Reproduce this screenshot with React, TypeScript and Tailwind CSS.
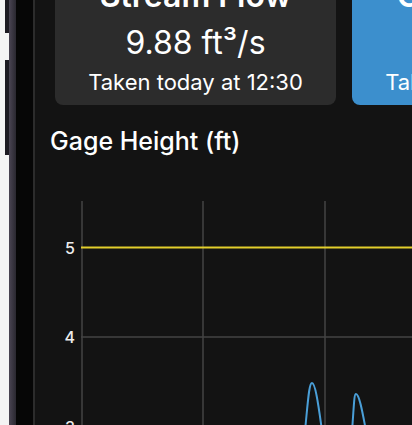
import React from "react";

interface ReadingCardProps {
  title: string;
  value: React.ReactNode;
  takenAt: string;
  tone: "dark" | "blue";
}

const ReadingCard = ({ title, value, takenAt, tone }: ReadingCardProps) => {
  const bg = tone === "blue" ? "bg-[#3c8fcd]" : "bg-[#2c2c2c]";
  return (
    <div
      className={`${bg} flex w-[281px] shrink-0 flex-col items-center rounded-[8px] pt-[17px] pb-[9px] text-white`}
    >
      <div className="text-[32px] leading-[38px] font-semibold whitespace-nowrap">{title}</div>
      <div className="mt-[9px] text-[32px] leading-[38px] whitespace-nowrap">{value}</div>
      <div className="mt-[6px] text-[22px] leading-[28px] whitespace-nowrap">{takenAt}</div>
    </div>
  );
};

const GageChart = () => {
  const grid = "#454545";
  return (
    <svg width="377" height="235" viewBox="35 190 377 235" className="block">
      {[82, 203, 325].map((x) => (
        <line key={x} x1={x} y1={200} x2={x} y2={425} stroke={grid} strokeWidth={1.5} />
      ))}
      <line x1={81} y1={336} x2={412} y2={336} stroke={grid} strokeWidth={1.5} />
      <line x1={81} y1={246.5} x2={412} y2={246.5} stroke="#e3cf2c" strokeWidth={2} />
      <g fill="#ececec" fontSize="16" fontWeight="500" fontFamily="Inter, sans-serif" textAnchor="end">
        <text x={75} y={252.5}>5</text>
        <text x={75} y={342}>4</text>
        <text x={75} y={432}>3</text>
      </g>
      <path
        d="M305 430 C308 400, 309 382, 312 382 C315 382, 318 400, 322 430"
        fill="none"
        stroke="#4a9fd8"
        strokeWidth={2}
      />
      <path
        d="M352 430 C354 405, 354 393, 356 393 C359 393, 362 408, 366 430"
        fill="none"
        stroke="#4a9fd8"
        strokeWidth={2}
      />
    </svg>
  );
};

export default function App() {
  return (
    <div className="flex h-[425px] w-[412px] overflow-hidden bg-white font-['Inter',sans-serif]">
      <div className="w-[5px] shrink-0 bg-[#f4f4f4]" />
      <div className="flex w-[4px] shrink-0 flex-col">
        <div className="h-[33px] bg-[#1d1b22]" />
        <div className="h-[27px] bg-[#f4f4f4]" />
        <div className="h-[95px] bg-[#1d1b22]" />
        <div className="flex-1 bg-[#f4f4f4]" />
      </div>
      <div className="w-[7px] shrink-0 bg-gradient-to-r from-[#4a4553] to-[#2a2830]" />
      <div className="w-[17px] shrink-0 bg-[#060606]" />
      <div className="w-[2px] shrink-0 bg-[#2c2c2c]" />
      <div className="flex min-w-0 flex-1 flex-col bg-[#131313]">
        <div className="-mt-[40px] flex gap-[16px] pl-[20px]">
          <ReadingCard
            tone="dark"
            title="Stream Flow"
            value={<>9.88 ft³/s</>}
            takenAt="Taken today at 12:30"
          />
          <ReadingCard tone="blue" title="Gage Height" value="3.02 ft" takenAt="Taken today at 12:30" />
        </div>
        <div className="mt-[21px] pl-[15px] text-[25px] leading-[30px] font-medium text-white">
          Gage Height (ft)
        </div>
        <div className="mt-[35px]">
          <GageChart />
        </div>
      </div>
    </div>
  );
}
